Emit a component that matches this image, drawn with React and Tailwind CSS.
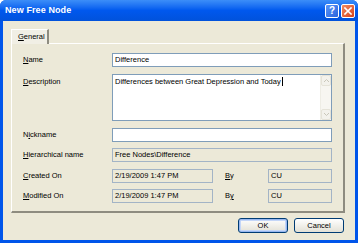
import React from 'react';

const font = "font-['Liberation_Sans',Arial,sans-serif]";

function Label({ children, className = '' }) {
  return <div className={`w-[89px] shrink-0 text-[7.5px] leading-[10px] text-black ${className}`}>{children}</div>;
}

function Field({ value, readOnly, className = '' }) {
  return (
    <div
      className={`h-[14px] border flex items-center pl-[2px] text-[7.5px] leading-[10px] text-black whitespace-nowrap overflow-hidden ${
        readOnly ? 'bg-[#ECE9D8] border-[#A3B4C6]' : 'bg-white border-[#7F9DB9]'
      } ${className}`}
    >
      {value}
    </div>
  );
}

function Row({ label, children, className = '' }) {
  return (
    <div className={`flex items-center ${className}`}>
      <Label>{label}</Label>
      {children}
    </div>
  );
}

function XpButton({ children, isDefault }) {
  return (
    <button
      className={`w-[50px] h-[15px] rounded-[3px] border border-[#003C74] bg-gradient-to-b from-white to-[#E3E1D6] text-[7.5px] leading-[10px] text-black flex items-center justify-center ${
        isDefault ? 'shadow-[inset_0_0_0_1px_#98B8F0,inset_0_0_0_2px_#C4D6F8]' : ''
      }`}
    >
      {children}
    </button>
  );
}

export default function App() {
  return (
    <div className={`w-[358px] h-[243px] flex flex-col bg-[#0055EA] rounded-t-[6px] overflow-hidden ${font}`}>
      {/* title bar */}
      <div className="h-[21px] shrink-0 flex items-center pl-[5px] pr-[3px] bg-gradient-to-b from-[#3C8EF8] via-[#0058EE] to-[#0152DB]">
        <span className="text-white font-bold text-[9px] leading-none tracking-[0.1px]">New Free Node</span>
        <div className="ml-auto flex gap-[2px]">
          <div className="w-[14px] h-[14px] rounded-[2px] border border-white bg-gradient-to-br from-[#5A95F8] to-[#2A63DD] flex items-center justify-center text-white font-bold text-[10px] leading-none">?</div>
          <div className="w-[14px] h-[14px] rounded-[2px] border border-white bg-gradient-to-br from-[#F08A60] to-[#D6401A] flex items-center justify-center">
            <svg width="8" height="8" viewBox="0 0 8 8">
              <path d="M1 1 L7 7 M7 1 L1 7" stroke="white" strokeWidth="1.6" strokeLinecap="square" />
            </svg>
          </div>
        </div>
      </div>

      {/* client area */}
      <div className="w-[352px] flex-1 mx-[3px] mb-[3px] bg-[#ECE9D8] flex flex-col pt-[7px] pl-[8px]">
        {/* tab */}
        <div className="flex">
          <div className="h-[15px] w-[38px] border-t border-l border-white border-r-2 border-r-[#8E8C80] bg-[#F1EFE5] flex items-center pl-[6px] text-[7.5px] leading-[10px] text-black relative top-[1px]">
            <span><u>G</u>eneral</span>
          </div>
        </div>

        {/* tab panel */}
        <div className="w-[334px] h-[170px] border-t border-l border-white border-r-2 border-b-2 border-r-[#8E8C80] border-b-[#8E8C80] pt-[9px] pl-[11px] pr-[11px] flex flex-col">
          <Row label={<span><u>N</u>ame</span>}>
            <Field value="Difference" className="w-[220px]" />
          </Row>

          <div className="flex mt-[7px]">
            <Label className="pt-[3px]"><u>D</u>escription</Label>
            <div className="w-[220px] h-[47px] border border-[#7F9DB9] bg-white flex">
              <div className="flex-1 pl-[2px] pt-[2px] text-[7.5px] leading-[10px] text-black whitespace-nowrap overflow-hidden flex">
                <span>Differences between Great Depression and Today</span>
                <span className="inline-block w-[1px] h-[9px] bg-black ml-[1px]" />
              </div>
              <div className="w-[11px] bg-[#F7F6F1] flex flex-col justify-between border-l border-[#EEEDE5]">
                <div className="h-[11px] bg-[#F3F2EC] border border-[#E5E3D8] rounded-[2px] flex items-center justify-center">
                  <svg width="5" height="3" viewBox="0 0 5 3"><path d="M0 3 L2.5 0.5 L5 3" stroke="#C9C7BA" fill="none" /></svg>
                </div>
                <div className="h-[11px] bg-[#F3F2EC] border border-[#E5E3D8] rounded-[2px] flex items-center justify-center">
                  <svg width="5" height="3" viewBox="0 0 5 3"><path d="M0 0 L2.5 2.5 L5 0" stroke="#C9C7BA" fill="none" /></svg>
                </div>
              </div>
            </div>
          </div>

          <Row label={<span>N<u>i</u>ckname</span>} className="mt-[7px]">
            <Field value="" className="w-[220px]" />
          </Row>

          <Row label={<span><u>H</u>ierarchical name</span>} className="mt-[6px]">
            <Field value="Free Nodes\Difference" readOnly className="w-[220px]" />
          </Row>

          <Row label={<span><u>C</u>reated On</span>} className="mt-[7px]">
            <Field value="2/19/2009 1:47 PM" readOnly className="w-[101px]" />
            <div className="w-[55px] pl-[12px] text-[7.5px] leading-[10px]"><u>B</u>y</div>
            <Field value="CU" readOnly className="w-[64px]" />
          </Row>

          <Row label={<span><u>M</u>odified On</span>} className="mt-[6px]">
            <Field value="2/19/2009 1:47 PM" readOnly className="w-[101px]" />
            <div className="w-[55px] pl-[12px] text-[7.5px] leading-[10px]">B<u>y</u></div>
            <Field value="CU" readOnly className="w-[64px]" />
          </Row>
        </div>

        {/* buttons */}
        <div className="w-[334px] flex justify-end gap-[6px] mt-[5px] pr-[1px]">
          <XpButton isDefault>OK</XpButton>
          <XpButton>Cancel</XpButton>
        </div>
      </div>
    </div>
  );
}
